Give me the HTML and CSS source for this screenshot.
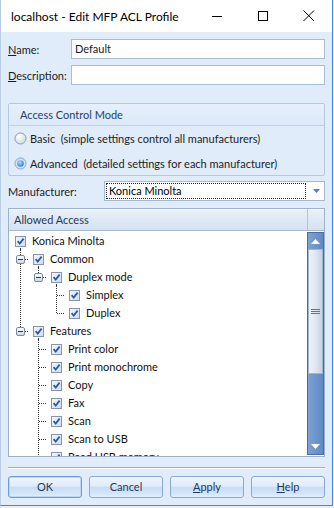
FILE: index.html
```html
<!DOCTYPE html>
<html lang="en">
<head>
  <meta charset="UTF-8" />
  <title>localhost - Edit MFP ACL Profile</title>
  <link rel="stylesheet" href="styles.css">
</head>
<body>
  <svg class="defs" xmlns="http://www.w3.org/2000/svg">
    <defs>
      <linearGradient id="cbg" x1="0" y1="0" x2="1" y2="1">
        <stop offset="0" stop-color="#f4f7fb"/>
        <stop offset="1" stop-color="#d3dde9"/>
      </linearGradient>
      <linearGradient id="exg" x1="0" y1="0" x2="0" y2="1">
        <stop offset="0" stop-color="#ffffff"/>
        <stop offset="1" stop-color="#c9d4e3"/>
      </linearGradient>
      <radialGradient id="rdg" cx="0.35" cy="0.3" r="0.8">
        <stop offset="0" stop-color="#ffffff"/>
        <stop offset="1" stop-color="#cdd7e4"/>
      </radialGradient>
      <radialGradient id="rdon" cx="0.4" cy="0.35" r="0.7">
        <stop offset="0" stop-color="#b9dcff"/>
        <stop offset="1" stop-color="#2f73c9"/>
      </radialGradient>
    </defs>
    <!-- tree pieces, one 18x18 cell each -->
    <symbol id="v" viewBox="0 0 18 18">
      <path d="M9.5 0V18" stroke="#333" stroke-dasharray="1 1"/>
    </symbol>
    <symbol id="t" viewBox="0 0 18 18">
      <path d="M9.5 0V18M10 9.5H18" stroke="#333" stroke-dasharray="1 1"/>
    </symbol>
    <symbol id="l" viewBox="0 0 18 18">
      <path d="M9.5 0V10M10 9.5H18" stroke="#333" stroke-dasharray="1 1"/>
    </symbol>
    <symbol id="xt" viewBox="0 0 18 18">
      <path d="M9.5 0V5M9.5 14V18M14 9.5H18" stroke="#333" stroke-dasharray="1 1"/>
      <rect x="5.5" y="5.5" width="8" height="8" rx="1.5" fill="url(#exg)" stroke="#7b89a1"/>
      <path d="M7 9.5H12" stroke="#2d3d58"/>
    </symbol>
    <symbol id="xl" viewBox="0 0 18 18">
      <path d="M9.5 0V5M14 9.5H18" stroke="#333" stroke-dasharray="1 1"/>
      <rect x="5.5" y="5.5" width="8" height="8" rx="1.5" fill="url(#exg)" stroke="#7b89a1"/>
      <path d="M7 9.5H12" stroke="#2d3d58"/>
    </symbol>
    <symbol id="cb" viewBox="0 0 18 18">
      <rect x="4.5" y="4.5" width="10" height="10" fill="url(#cbg)" stroke="#8495b0"/>
      <path d="M6.6 9.2L8.7 11.6L12.6 6.6" fill="none" stroke="#2b5ca8" stroke-width="1.8"/>
    </symbol>
    <symbol id="cbd" viewBox="0 0 18 18">
      <rect x="4.5" y="4.5" width="10" height="10" fill="url(#cbg)" stroke="#8495b0"/>
      <path d="M6.6 9.2L8.7 11.6L12.6 6.6" fill="none" stroke="#2b5ca8" stroke-width="1.8"/>
      <path d="M9.5 16V18" stroke="#333"/>
    </symbol>
  </svg>

  <div class="window">
    <div class="titlebar">
      <span class="title">localhost - Edit MFP ACL Profile</span>
      <div class="controls">
        <span class="ctl"><svg width="11" height="11"><path d="M0 5.5H10" stroke="#000"/></svg></span>
        <span class="ctl"><svg width="11" height="11"><rect x="0.5" y="0.5" width="9" height="9" fill="none" stroke="#000"/></svg></span>
        <span class="ctl"><svg width="12" height="12"><path d="M0.5 0.5L11 11M11 0.5L0.5 11" stroke="#000"/></svg></span>
      </div>
    </div>

    <div class="client">
      <div class="field">
        <label><u>N</u>ame:</label>
        <div class="input">Default</div>
      </div>
      <div class="field second">
        <label><u>D</u>escription:</label>
        <div class="input"></div>
      </div>

      <div class="group">
        <div class="group-head">Access Control Mode</div>
        <div class="group-body">
          <div class="radio-row">
            <svg class="radio" width="13" height="13"><circle cx="6.5" cy="6.5" r="5.5" fill="url(#rdg)" stroke="#8a9ab2"/></svg>
            <span>Basic&nbsp; (simple settings control all manufacturers)</span>
          </div>
          <div class="radio-row">
            <svg class="radio" width="13" height="13"><circle cx="6.5" cy="6.5" r="5.5" fill="#cfe3f8" stroke="#7fa6d6"/><circle cx="6.5" cy="6.5" r="3.3" fill="url(#rdon)"/></svg>
            <span>Advanced&nbsp; (detailed settings for each manufacturer)</span>
          </div>
        </div>
      </div>

      <div class="field manu">
        <label>Manufacturer:</label>
        <div class="combo">
          <span class="focus">Konica Minolta</span>
          <svg class="drop" width="7" height="4"><path d="M0 0H7L3.5 4Z" fill="#5a7fb0"/></svg>
        </div>
      </div>

      <div class="tree">
        <div class="tree-head">
          <span class="head-title">Allowed Access</span>
          <span class="head-end"></span>
        </div>
        <div class="tree-body">
          <div class="rows">
            <div class="row"><svg class="c"><use href="#cbd"/></svg><span>Konica Minolta</span></div>
            <div class="row"><svg class="c"><use href="#xt"/></svg><svg class="c"><use href="#cbd"/></svg><span>Common</span></div>
            <div class="row"><svg class="c"><use href="#v"/></svg><svg class="c"><use href="#xl"/></svg><svg class="c"><use href="#cbd"/></svg><span>Duplex mode</span></div>
            <div class="row"><svg class="c"><use href="#v"/></svg><i class="c"></i><svg class="c"><use href="#t"/></svg><svg class="c"><use href="#cb"/></svg><span>Simplex</span></div>
            <div class="row"><svg class="c"><use href="#v"/></svg><i class="c"></i><svg class="c"><use href="#l"/></svg><svg class="c"><use href="#cb"/></svg><span>Duplex</span></div>
            <div class="row"><svg class="c"><use href="#xl"/></svg><svg class="c"><use href="#cbd"/></svg><span>Features</span></div>
            <div class="row"><i class="c"></i><svg class="c"><use href="#t"/></svg><svg class="c"><use href="#cb"/></svg><span>Print color</span></div>
            <div class="row"><i class="c"></i><svg class="c"><use href="#t"/></svg><svg class="c"><use href="#cb"/></svg><span>Print monochrome</span></div>
            <div class="row"><i class="c"></i><svg class="c"><use href="#t"/></svg><svg class="c"><use href="#cb"/></svg><span>Copy</span></div>
            <div class="row"><i class="c"></i><svg class="c"><use href="#t"/></svg><svg class="c"><use href="#cb"/></svg><span>Fax</span></div>
            <div class="row"><i class="c"></i><svg class="c"><use href="#t"/></svg><svg class="c"><use href="#cb"/></svg><span>Scan</span></div>
            <div class="row"><i class="c"></i><svg class="c"><use href="#t"/></svg><svg class="c"><use href="#cb"/></svg><span>Scan to USB</span></div>
            <div class="row"><i class="c"></i><svg class="c"><use href="#t"/></svg><svg class="c"><use href="#cb"/></svg><span>Read USB memory</span></div>
          </div>
          <div class="scrollbar">
            <div class="sb-btn"><svg width="9" height="5"><path d="M0 5H9L4.5 0Z" fill="#fff"/></svg></div>
            <div class="thumb">
              <svg width="9" height="6"><path d="M0 0.5H9M0 2.5H9M0 4.5H9" stroke="#5d7797"/></svg>
            </div>
            <div class="track"></div>
            <div class="sb-btn"><svg width="9" height="5"><path d="M0 0H9L4.5 5Z" fill="#fff"/></svg></div>
          </div>
        </div>
      </div>

      <div class="sep"></div>

      <div class="buttons">
        <div class="btn default">OK</div>
        <div class="btn">Cancel</div>
        <div class="btn"><u>A</u>pply</div>
        <div class="btn"><u>H</u>elp</div>
      </div>
    </div>
  </div>
</body>
</html>
```

FILE: styles.css
```css
body {
  margin: 0;
  background-color: #eceef1;
  font-family: Lato, "Noto Sans", sans-serif;
  font-size: 11px;
  color: #1c1c1c;
}

.defs {
  display: block;
  width: 0;
  height: 0;
}

.window {
  width: 333px;
  height: 506px;
  box-sizing: border-box;
  border: 1px solid #3a8ad9;
  border-top: 0;
  border-left-color: #b8cce4;
  background-color: #e0ecfa;
  display: flex;
  flex-direction: column;
}

/* title bar */
.titlebar {
  height: 32px;
  flex-shrink: 0;
  background-color: #fff;
  display: flex;
  align-items: center;
  padding-left: 10px;
}

.title {
  flex: 1;
  font-size: 12px;
  color: #000;
}

.controls {
  display: flex;
}

.ctl {
  width: 46px;
  height: 32px;
  display: flex;
  align-items: center;
  justify-content: center;
}

/* client area */
.client {
  flex: 1;
  padding: 7px 7px 0;
  display: flex;
  flex-direction: column;
}

.field {
  display: flex;
  align-items: center;
  height: 20px;
}

.field.second {
  margin-top: 6px;
}

.field label {
  width: 63px;
  flex-shrink: 0;
}

.input {
  flex: 1;
  height: 20px;
  box-sizing: border-box;
  border: 1px solid #abbdd5;
  background-color: #fff;
  padding-left: 3px;
  line-height: 18px;
}

/* access control mode */
.group {
  margin-top: 18px;
  height: 73px;
  box-sizing: border-box;
  border: 1px solid #b6c8df;
  border-radius: 2px;
}

.group-head {
  height: 21px;
  line-height: 21px;
  padding-left: 11px;
  border-bottom: 1px solid #c2d3e8;
  background: linear-gradient(#e7f0fc, #dce9f9);
  color: #1f3f6c;
}

.radio-row {
  height: 25px;
  display: flex;
  align-items: center;
  padding-left: 5px;
}

.radio-row + .radio-row {
  height: 24px;
}

.radio {
  margin-right: 3px;
  flex-shrink: 0;
}

/* manufacturer */
.manu {
  margin-top: 5px;
}

.manu label {
  width: 96px;
}

.combo {
  flex: 1;
  height: 20px;
  box-sizing: border-box;
  border: 1px solid #a7bad4;
  background-color: #fff;
  display: flex;
  align-items: center;
  padding: 0 4px 0 1px;
}

.focus {
  flex: 1;
  height: 16px;
  box-sizing: border-box;
  border: 1px dotted #222;
  line-height: 14px;
  padding-left: 2px;
  color: #000;
}

.drop {
  margin-left: 7px;
}

/* allowed access tree */
.tree {
  margin-top: 7px;
  height: 249px;
  box-sizing: border-box;
  border: 1px solid #9db1ca;
  background-color: #fff;
  display: flex;
  flex-direction: column;
}

.tree-head {
  height: 22px;
  flex-shrink: 0;
  box-sizing: border-box;
  display: flex;
  border-bottom: 1px solid #aabbd1;
  background: linear-gradient(#e9f0f9, #d5e2f2);
  box-shadow: inset 0 1px 0 #f7faff;
}

.head-title {
  flex: 1;
  padding-left: 5px;
  line-height: 21px;
  border-right: 1px solid #b1c2d7;
  color: #1e395b;
}

.head-end {
  width: 16px;
}

.tree-body {
  flex: 1;
  min-height: 0;
  display: flex;
}

.rows {
  flex: 1;
  padding: 1px 0 0 2px;
  overflow: hidden;
}

.row {
  height: 18px;
  display: flex;
  align-items: center;
  line-height: 18px;
  color: #111;
}

.c {
  display: block;
  width: 18px;
  height: 18px;
  flex-shrink: 0;
}

.row span {
  margin-left: 3px;
  white-space: nowrap;
}

/* scrollbar */
.scrollbar {
  width: 17px;
  margin: 1px 0;
  box-sizing: border-box;
  border: 1px solid #48709f;
  background: linear-gradient(90deg, #7ca2d3, #5f8ac4);
  display: flex;
  flex-direction: column;
}

.sb-btn {
  height: 16px;
  flex-shrink: 0;
  display: flex;
  align-items: center;
  justify-content: center;
}

.thumb {
  height: 125px;
  flex-shrink: 0;
  box-sizing: border-box;
  border: 1px solid #9fb4cd;
  background: linear-gradient(90deg, #eef3f8, #dde6f0 55%, #c5d3e3);
  display: flex;
  align-items: center;
  justify-content: center;
}

.track {
  flex: 1;
}

/* bottom */
.sep {
  margin-top: 10px;
  border-top: 1px solid #a4acb7;
  border-bottom: 1px solid #fbfdff;
}

.buttons {
  display: flex;
  gap: 7px;
  margin-top: 7px;
}

.btn {
  width: 74px;
  height: 22px;
  box-sizing: border-box;
  border: 1px solid #8aaad4;
  border-radius: 3px;
  background: linear-gradient(#eef5fd 0%, #e0ecfa 45%, #c8def6 52%, #d3e6fa 85%, #e6f1fd 100%);
  text-align: center;
  line-height: 20px;
  color: #1e395b;
}

.btn.default {
  border-color: #6f9bd4;
  box-shadow: inset 0 0 0 1px #b9d8f7;
}
```
